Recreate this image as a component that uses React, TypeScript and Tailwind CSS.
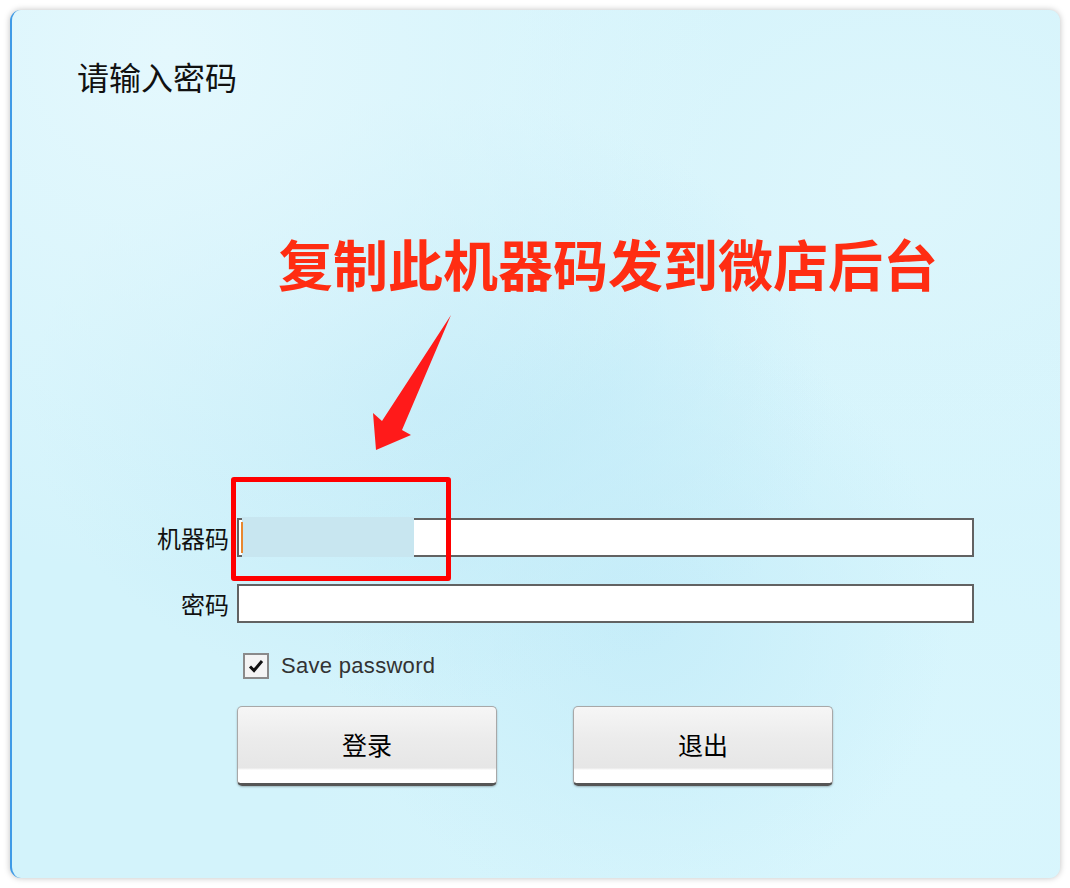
import React from "react";

const cjk = { fontFamily: '"Noto Sans CJK SC", "Noto Sans", sans-serif' };

function Btn({ label }: { label: string }) {
  return (
    <button
      className="relative w-[260px] h-[80px] rounded-[5px] border border-[#a8a8a8] border-b-[3px] border-b-[#555555] bg-[linear-gradient(to_bottom,#f6f6f6_0%,#ececec_40%,#e6e6e6_80%,#ffffff_83%,#ffffff_100%)] shadow-[0_1px_2px_rgba(0,0,0,0.25)] text-[25px] text-black flex items-center justify-center"
      style={cjk}
    >
      {label}
    </button>
  );
}

export default function App() {
  return (
    <div className="w-[1070px] h-[888px] bg-white pt-[10px] pl-[10px]">
      <div className="relative w-[1050px] h-[868px] rounded-[11px] overflow-hidden border-l-[2px] border-[#3f9ae6] shadow-[0_0_6px_rgba(0,0,0,0.25)] bg-[#d3f3fb]">
        {/* soft background blobs */}
        <div className="absolute inset-0 bg-[radial-gradient(ellipse_at_15%_5%,#e4f8fd_0%,rgba(228,248,253,0)_45%),radial-gradient(ellipse_at_40%_45%,#c2ebf8_0%,rgba(194,235,248,0)_45%),radial-gradient(ellipse_at_60%_70%,#c6edf9_0%,rgba(198,237,249,0)_35%),radial-gradient(ellipse_at_90%_90%,#d9f6fd_0%,rgba(217,246,253,0)_50%),radial-gradient(ellipse_at_85%_20%,#ddf6fc_0%,rgba(221,246,252,0)_40%)]" />

        <div className="relative flex flex-col">
          <div className="pt-[50px] pl-[65px] text-[32px] leading-[32px] text-[#111]" style={cjk}>
            请输入密码
          </div>

          <div
            className="mt-[143px] pl-[266px] text-[55px] leading-[55px] font-bold text-[#ff2d12]"
            style={cjk}
          >
            复制此机器码发到微店后台
          </div>

          <div className="mt-[228px] flex items-center">
            <div className="w-[217px] text-right text-[24px] leading-[39px] text-[#111]" style={cjk}>
              机器码
            </div>
            <div className="relative ml-[8px] w-[737px] h-[39px] bg-white border-2 border-[#626262]">
              <div className="absolute left-[3px] -top-[3px] w-[172px] h-[40px] bg-[#c8e6f0]" />
              <div className="absolute left-[2px] top-[2px] w-[2px] h-[31px] bg-[#e8872f]" />
            </div>
          </div>

          <div className="mt-[27px] flex items-center">
            <div className="w-[217px] text-right text-[24px] leading-[39px] text-[#111]" style={cjk}>
              密码
            </div>
            <div className="ml-[8px] w-[737px] h-[39px] bg-white border-2 border-[#626262]" />
          </div>

          <div className="mt-[30px] pl-[231px] flex items-center gap-[12px]">
            <div className="w-[26px] h-[26px] border-2 border-[#8a8a8a] bg-[#f4f4f4] flex items-center justify-center">
              <svg width="16" height="14" viewBox="0 0 16 14">
                <path d="M2 7.5 L6 11.5 L14 2" fill="none" stroke="#111" strokeWidth="3" />
              </svg>
            </div>
            <span
              className="text-[22px] leading-[26px] text-[#333] tracking-[0.3px]"
              style={{ fontFamily: '"Liberation Sans", Arial, sans-serif' }}
            >
              Save password
            </span>
          </div>

          <div className="mt-[27px] pl-[225px] flex gap-[76px]">
            <Btn label="登录" />
            <Btn label="退出" />
          </div>
        </div>

        {/* annotation overlays */}
        <div className="absolute left-[219px] top-[467px] w-[220px] h-[104px] border-[5px] border-[#ff0000] rounded-[3px]" />
        <svg className="absolute left-0 top-0" width="1050" height="868" viewBox="11 10 1050 868">
          <polygon points="450,315 401,430 410,435 375,450 372,413 381,421" fill="#ff1a1a" />
        </svg>
      </div>
    </div>
  );
}
